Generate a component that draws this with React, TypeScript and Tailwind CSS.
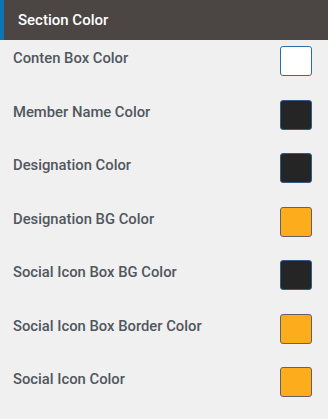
const rows = [
  { label: "Conten Box Color", color: "bg-white", border: "border-[#2e6da4]" },
  { label: "Member Name Color", color: "bg-[#252525]", border: "border-[#2e5d8a]" },
  { label: "Designation Color", color: "bg-[#252525]", border: "border-[#2e5d8a]" },
  { label: "Designation BG Color", color: "bg-[#fdad1c]", border: "border-[#5f6368]" },
  { label: "Social Icon Box BG Color", color: "bg-[#252525]", border: "border-[#2e5d8a]" },
  { label: "Social Icon Box Border Color", color: "bg-[#fdad1c]", border: "border-[#5f6368]" },
  { label: "Social Icon Color", color: "bg-[#fdad1c]", border: "border-[#5f6368]" },
];

export default function App() {
  return (
    <div className="w-[328px] h-[419px] bg-[#f0f0f0] overflow-hidden font-['Roboto',sans-serif]">
      <div className="h-10 flex items-center bg-[#4b4644] border-l-4 border-[#0d74b6]">
        <span className="pl-[14px] text-[15px] font-medium text-white">Section Color</span>
      </div>
      <div className="flex flex-col pt-[6px]">
        {rows.map((row) => (
          <div key={row.label} className="h-[53.5px] flex items-start justify-between pl-[13px] pr-4">
            <span className="mt-[2px] text-[14.8px] leading-5 font-medium text-[#50575e]">{row.label}</span>
            <div className={`w-8 h-[30px] rounded-[3px] border ${row.color} ${row.border}`} />
          </div>
        ))}
      </div>
    </div>
  );
}
